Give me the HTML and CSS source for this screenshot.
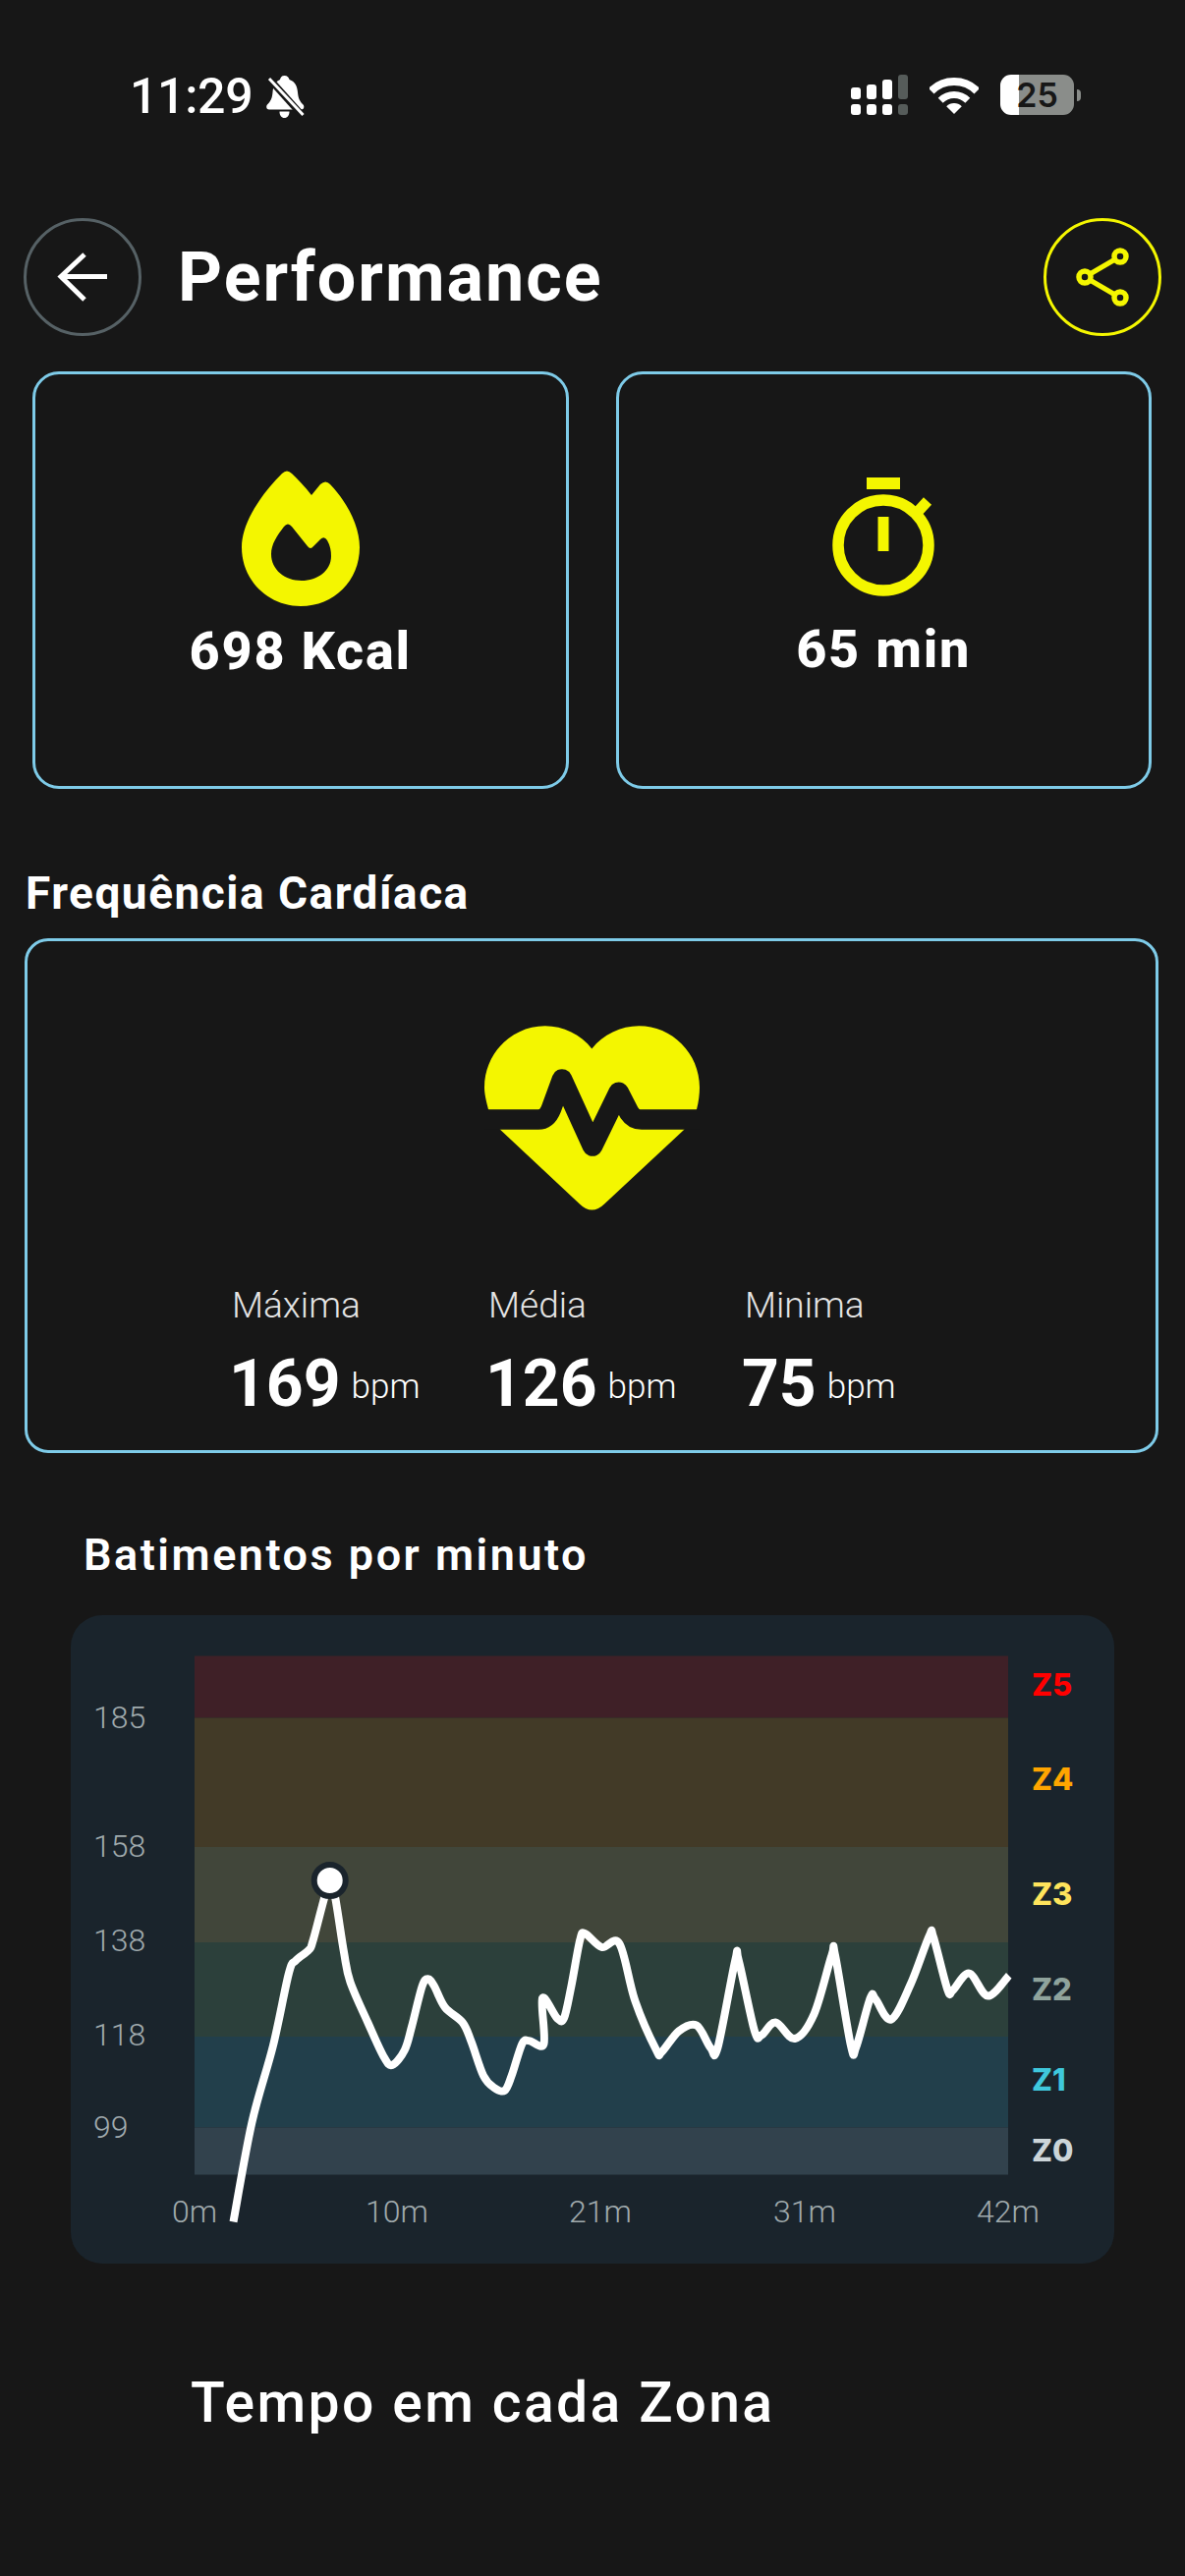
FILE: index.html
```html
<!DOCTYPE html>
<html lang="pt">
<head>
    <meta charset="UTF-8">
    <meta name="viewport" content="width=device-width, initial-scale=1.0">
    <title>Performance</title>
    <link rel="stylesheet" href="styles.css">
</head>
<body>
    <!-- Status bar -->
    <div class="status-bar">
        <span class="status-time">11:29</span>
        <svg class="status-bell" viewBox="0 0 39 43">
            <path d="M18.5 0c3 0 4.5 2 5 4 6 2 8 7 8.500 13 .5 6 2 9 5.500 12.500 1.500 1.500 1 5-2 5H3c-3 0-3.500-3.500-2-5C4.500 26 6 23 6.500 17 7 11 9 6 14 4c.5-2 1.500-4 4.500-4zM13.500 36.500h10c0 4-2 6.500-5 6.500s-5-2.500-5-6.500z" fill="#fff"/>
            <line x1="2" y1="2" x2="37" y2="41" stroke="#171717" stroke-width="7"/>
            <line x1="3" y1="3" x2="37.500" y2="40" stroke="#fff" stroke-width="3"/>
        </svg>
        <div class="status-right">
            <svg class="status-signal" viewBox="0 0 58 41">
                <rect x="0" y="13" width="10" height="12" rx="3" fill="#fff"/>
                <rect x="16" y="10" width="10" height="15" rx="3" fill="#fff"/>
                <rect x="32" y="5" width="10" height="20" rx="3" fill="#fff"/>
                <rect x="48" y="0" width="10" height="25" rx="3" fill="#565c5a"/>
                <rect x="0" y="30" width="10" height="11" rx="3" fill="#fff"/>
                <rect x="16" y="30" width="10" height="11" rx="3" fill="#fff"/>
                <rect x="32" y="30" width="10" height="11" rx="3" fill="#fff"/>
                <rect x="48" y="30" width="10" height="11" rx="3" fill="#565c5a"/>
            </svg>
            <svg class="status-wifi" viewBox="0 0 50 37">
                <path d="M1.700 13.700A33 33 0 0 1 48.300 13.700" fill="none" stroke="#fff" stroke-width="8"/>
                <path d="M11.200 23.200A19.500 19.500 0 0 1 38.800 23.200" fill="none" stroke="#fff" stroke-width="7"/>
                <path d="M25 37L17.200 29.200A11 11 0 0 1 32.800 29.200Z" fill="#fff"/>
            </svg>
            <div class="battery">25</div>
            <div class="battery-nub"></div>
        </div>
    </div>

    <!-- Header -->
    <div class="header">
        <div class="round-btn back-btn">
            <svg viewBox="0 0 120 120" class="round-icon">
                <path d="M85 59.500H39M62 37L38 59.500 62 83" fill="none" stroke="#fff" stroke-width="5"/>
            </svg>
        </div>
        <h1 class="page-title">Performance</h1>
        <div class="round-btn share-btn">
            <svg viewBox="0 0 120 120" class="round-icon">
                <line x1="42" y1="60" x2="78" y2="39" stroke="#f4f600" stroke-width="5"/>
                <line x1="42" y1="60" x2="78" y2="81" stroke="#f4f600" stroke-width="5"/>
                <circle cx="78" cy="39" r="6" fill="#171717" stroke="#f4f600" stroke-width="5.500"/>
                <circle cx="42" cy="60" r="6" fill="#171717" stroke="#f4f600" stroke-width="5.500"/>
                <circle cx="78" cy="81" r="6" fill="#171717" stroke="#f4f600" stroke-width="5.500"/>
            </svg>
        </div>
    </div>

    <!-- Kcal and time -->
    <div class="summary">
        <div class="summary-card kcal-card">
            <svg class="flame-icon" viewBox="0 0 120 138">
                <path fill-rule="evenodd" fill="#f4f600" d="M41 3Q46-2 51 3C57 9 65 17 71 25L80 14Q85.500 9 90 14C108 33 120 57 120 78C120 112 94 138 60 138C27 138 0 112 0 78C0 55 17 27 41 3ZM43 57Q47 52 51 57L67 77Q70 81 73 77L80 70Q84 66 87 71Q91 78 91 87C91 102 77 112 61 112C44 112 30 101 30 85C30 75 36 66 43 57Z"/>
            </svg>
            <div class="summary-value">698 Kcal</div>
        </div>
        <div class="summary-card time-card">
            <svg class="watch-icon" viewBox="0 0 104 121">
                <rect x="35" y="0" width="34" height="12" fill="#f4f600"/>
                <circle cx="52" cy="69" r="46" fill="none" stroke="#f4f600" stroke-width="11.500"/>
                <line x1="85" y1="37" x2="97" y2="24" stroke="#f4f600" stroke-width="11"/>
                <rect x="46.500" y="40" width="11" height="35" fill="#f4f600"/>
            </svg>
            <div class="summary-value">65 min</div>
        </div>
    </div>

    <!-- Heart rate -->
    <h2 class="section-title">Frequência Cardíaca</h2>
    <div class="heart-card">
        <svg class="heart-icon" viewBox="220 102 657 563">
            <path fill="#f4f600" d="M232 357C225 330 220 310 220 290C220 185 305 102 405 102C460 102 515 128 548 172C582 128 637 102 692 102C792 102 877 185 877 290C877 310 874 335 868 357L830 419L587 645Q548 683 510 645L268 419Z"/>
            <path fill="none" stroke="#171717" stroke-width="62" stroke-linejoin="round" d="M190 388H385C410 388 418 370 424 355L457 265L550 469L630 305L662 367C672 382 680 388 700 388H900"/>
        </svg>
        <div class="heart-stats">
            <div class="heart-stat">
                <div class="stat-label">Máxima</div>
                <div class="stat-value">169<span class="stat-unit">bpm</span></div>
            </div>
            <div class="heart-stat">
                <div class="stat-label">Média</div>
                <div class="stat-value">126<span class="stat-unit">bpm</span></div>
            </div>
            <div class="heart-stat">
                <div class="stat-label">Minima</div>
                <div class="stat-value">75<span class="stat-unit">bpm</span></div>
            </div>
        </div>
    </div>

    <!-- Chart -->
    <h3 class="chart-title">Batimentos por minuto</h3>
    <div class="chart-card">
        <svg class="chart-svg" viewBox="72 1644 1062 660">
            <rect x="198" y="1685.500" width="828" height="63" fill="#3f2027"/>
            <rect x="198" y="1748.500" width="828" height="131.500" fill="#423a27"/>
            <rect x="198" y="1880" width="828" height="97" fill="#41463a"/>
            <rect x="198" y="1977" width="828" height="96" fill="#2c403b"/>
            <rect x="198" y="2073" width="828" height="92.500" fill="#223f4b"/>
            <rect x="198" y="2165.500" width="828" height="48" fill="#32424d"/>

            <text class="axis-text" x="95" y="1759">185</text>
            <text class="axis-text" x="95" y="1890">158</text>
            <text class="axis-text" x="95" y="1986">138</text>
            <text class="axis-text" x="95" y="2082">118</text>
            <text class="axis-text" x="95" y="2175.500">99</text>

            <text class="axis-text axis-mid" x="198" y="2261.500">0m</text>
            <text class="axis-text axis-mid" x="404" y="2261.500">10m</text>
            <text class="axis-text axis-mid" x="611" y="2261.500">21m</text>
            <text class="axis-text axis-mid" x="819" y="2261.500">31m</text>
            <text class="axis-text axis-mid" x="1026" y="2261.500">42m</text>

            <text class="zone-text zone5" x="1050" y="1726">Z5</text>
            <text class="zone-text zone4" x="1050" y="1822">Z4</text>
            <text class="zone-text zone3" x="1050" y="1938.500">Z3</text>
            <text class="zone-text zone2" x="1050" y="2035.500">Z2</text>
            <text class="zone-text zone1" x="1050" y="2128">Z1</text>
            <text class="zone-text zone0" x="1050" y="2199.500">Z0</text>

            <path id="bpm-line" class="chart-line"/>
            <circle cx="335.700" cy="1914" r="16" fill="#fff" stroke="#1a242c" stroke-width="6"/>
        </svg>
    </div>

    <h3 class="zones-title">Tempo em cada Zona</h3>

    <script src="chart.js"></script>
</body>
</html>
```

FILE: styles.css
```css
body {
    margin: 0;
    width: 1206px;
    height: 2622px;
    overflow: hidden;
    background-color: #171717;
    color: #fff;
    font-family: Roboto, "Liberation Sans", sans-serif;
}

h1, h2, h3 {
    margin: 0;
}

/* Status bar */
.status-bar {
    display: flex;
    align-items: flex-start;
    height: 44px;
    padding: 76px 106px 0 132px;
}

.status-time {
    font-size: 50px;
    font-weight: 500;
    line-height: 44px;
    letter-spacing: -0.3px;
}

.status-bell {
    width: 39px;
    height: 43px;
    margin: 1px 0 0 14px;
}

.status-right {
    display: flex;
    align-items: flex-start;
    margin-left: auto;
}

.status-signal {
    width: 58px;
    height: 41px;
}

.status-wifi {
    width: 50px;
    height: 37px;
    margin: 3px 0 0 22px;
}

.battery {
    width: 75px;
    height: 41px;
    margin-left: 22px;
    border-radius: 11px;
    background: linear-gradient(to right, #fff 19px, #8a8d8a 19px);
    color: #171717;
    font-family: Inter, sans-serif;
    font-size: 34px;
    font-weight: 600;
    line-height: 41px;
    text-align: center;
}

.battery-nub {
    width: 4px;
    height: 12px;
    margin: 15px 0 0 3px;
    border-radius: 0 6px 6px 0;
    background-color: #8a8d8a;
}

/* Header */
.header {
    display: flex;
    align-items: center;
    margin-top: 102px;
    padding: 0 24px;
}

.round-btn {
    width: 120px;
    height: 120px;
    box-sizing: border-box;
    border-radius: 50%;
}

.round-icon {
    display: block;
    width: 120px;
    height: 120px;
    margin: -3px;
}

.back-btn {
    border: 3px solid #566165;
}

.share-btn {
    margin-left: auto;
    border: 3px solid #f4f600;
}

.page-title {
    margin-left: 37px;
    font-size: 70px;
    font-weight: 700;
    line-height: 1;
    letter-spacing: 2px;
}

/* Summary cards */
.summary {
    display: flex;
    gap: 48px;
    margin-top: 36px;
    padding: 0 34px 0 33px;
}

.summary-card {
    display: flex;
    flex-direction: column;
    align-items: center;
    flex: 1;
    height: 425px;
    box-sizing: border-box;
    border: 3px solid #7ecbe8;
    border-radius: 27px;
}

.kcal-card {
    padding-top: 98px;
}

.time-card {
    padding-top: 105px;
}

.flame-icon {
    width: 120px;
    height: 138px;
}

.watch-icon {
    width: 104px;
    height: 121px;
}

.summary-value {
    font-size: 54px;
    font-weight: 800;
    line-height: 1;
    letter-spacing: 1.8px;
}

.kcal-card .summary-value {
    margin-top: 19px;
}

.time-card .summary-value {
    margin-top: 27px;
}

/* Heart rate */
.section-title {
    margin: 83px 0 0 26px;
    font-size: 46px;
    font-weight: 700;
    line-height: 1;
    letter-spacing: 1.5px;
}

.heart-card {
    display: flex;
    flex-direction: column;
    align-items: center;
    height: 524px;
    box-sizing: border-box;
    margin: 23px 27px 0 25px;
    padding-top: 86px;
    border: 3px solid #7ecbe8;
    border-radius: 24px;
}

.heart-icon {
    flex: none;
    width: 219px;
    height: 188px;
}

.heart-stats {
    display: grid;
    grid-template-columns: repeat(3, 261px);
    align-self: flex-start;
    margin-top: 78px;
    padding-left: 208px;
}

.stat-label {
    font-size: 37px;
    font-weight: 300;
    line-height: 37px;
    color: #e4e4e4;
}

.stat-value {
    margin: 30px 0 0 -3px;
    font-size: 66px;
    font-weight: 700;
    line-height: 64px;
}

.stat-unit {
    margin-left: 11px;
    font-size: 35px;
    font-weight: 300;
    line-height: 0;
    vertical-align: 8px;
}

/* Chart */
.chart-title {
    margin: 81px 0 0 85px;
    font-size: 45px;
    font-weight: 600;
    line-height: 45px;
    letter-spacing: 2.5px;
}

.chart-card {
    width: 1062px;
    height: 660px;
    margin: 39px 0 0 72px;
    border-radius: 32px;
    background-color: #1a242c;
}

.chart-svg {
    display: block;
    width: 1062px;
    height: 660px;
}

.axis-text {
    font-size: 32px;
    font-weight: 300;
    fill: #a0aaad;
}

.axis-mid {
    text-anchor: middle;
}

.zone-text {
    font-family: Inter, sans-serif;
    font-size: 31px;
    font-weight: 800;
}

.zone5 { fill: #ff0000; }
.zone4 { fill: #ffa500; }
.zone3 { fill: #ffe45c; }
.zone2 { fill: #8fa39c; }
.zone1 { fill: #3fc8dc; }
.zone0 { fill: #ccd5d9; }

.chart-line {
    fill: none;
    stroke: #fff;
    stroke-width: 8;
    stroke-linejoin: round;
}

.zones-title {
    margin: 113px 0 0 194px;
    font-size: 57px;
    font-weight: 500;
    line-height: 1;
    letter-spacing: 2.4px;
}
```

FILE: chart.js
```js
// Heart rate samples, in the chart's own coordinates
const points = [
    [237.5, 2261.5], [256.4, 2160.4], [277.9, 2082.4], [293.9, 2008.6], [301, 1995.6],
    [314.3, 1984.8], [318.9, 1974], [335.7, 1914], [341, 1930.6], [350, 1987],
    [356.4, 2017.3], [374.3, 2058.5], [390.4, 2093.2], [399.3, 2101.9], [411.8, 2086.7],
    [419, 2062.9], [429.6, 2021.7], [435.7, 2014.3], [442, 2021.7], [452.9, 2043.3],
    [470.7, 2058.5], [479.6, 2078], [492, 2112.7], [502.9, 2124.9], [513.6, 2127.9],
    [520.7, 2112.7], [531.4, 2080.2], [538.6, 2077.2], [553.5, 2080.2], [552, 2033.8],
    [567, 2054.2], [574, 2054.2], [581.4, 2021.7], [590.4, 1974], [595.7, 1968.3],
    [612.5, 1982], [630.4, 1978.3], [646.4, 2036.8], [667.9, 2086.7], [673.2, 2088.9],
    [691, 2067.2], [708.9, 2061.6], [723.2, 2084.5], [730.4, 2084.5], [748.2, 1995.6],
    [751.8, 1995.6], [767.9, 2067.2], [775, 2071.5], [789.3, 2058.5], [808.9, 2075],
    [828.6, 2049.8], [846.4, 1990.4], [850, 1990.4], [866, 2082.4], [871.4, 2083.2],
    [885.7, 2033.8], [891, 2034.7], [907, 2055.5], [926.8, 2019.5], [945.7, 1970.5],
    [950, 1971.8], [964.3, 2025.1], [969.6, 2026], [986.4, 2008.6], [1005.4, 2031.6],
    [1026.8, 2010.8]
];

// Smooth the line through the samples (Catmull-Rom to bezier)
let d = `M${points[0][0]} ${points[0][1]}`;
for (let i = 0; i < points.length - 1; i++) {
    const p0 = points[Math.max(i - 1, 0)];
    const p1 = points[i];
    const p2 = points[i + 1];
    const p3 = points[Math.min(i + 2, points.length - 1)];
    const c1x = p1[0] + (p2[0] - p0[0]) / 6;
    const c1y = p1[1] + (p2[1] - p0[1]) / 6;
    const c2x = p2[0] - (p3[0] - p1[0]) / 6;
    const c2y = p2[1] - (p3[1] - p1[1]) / 6;
    d += `C${c1x} ${c1y} ${c2x} ${c2y} ${p2[0]} ${p2[1]}`;
}
document.getElementById("bpm-line").setAttribute("d", d);
```
